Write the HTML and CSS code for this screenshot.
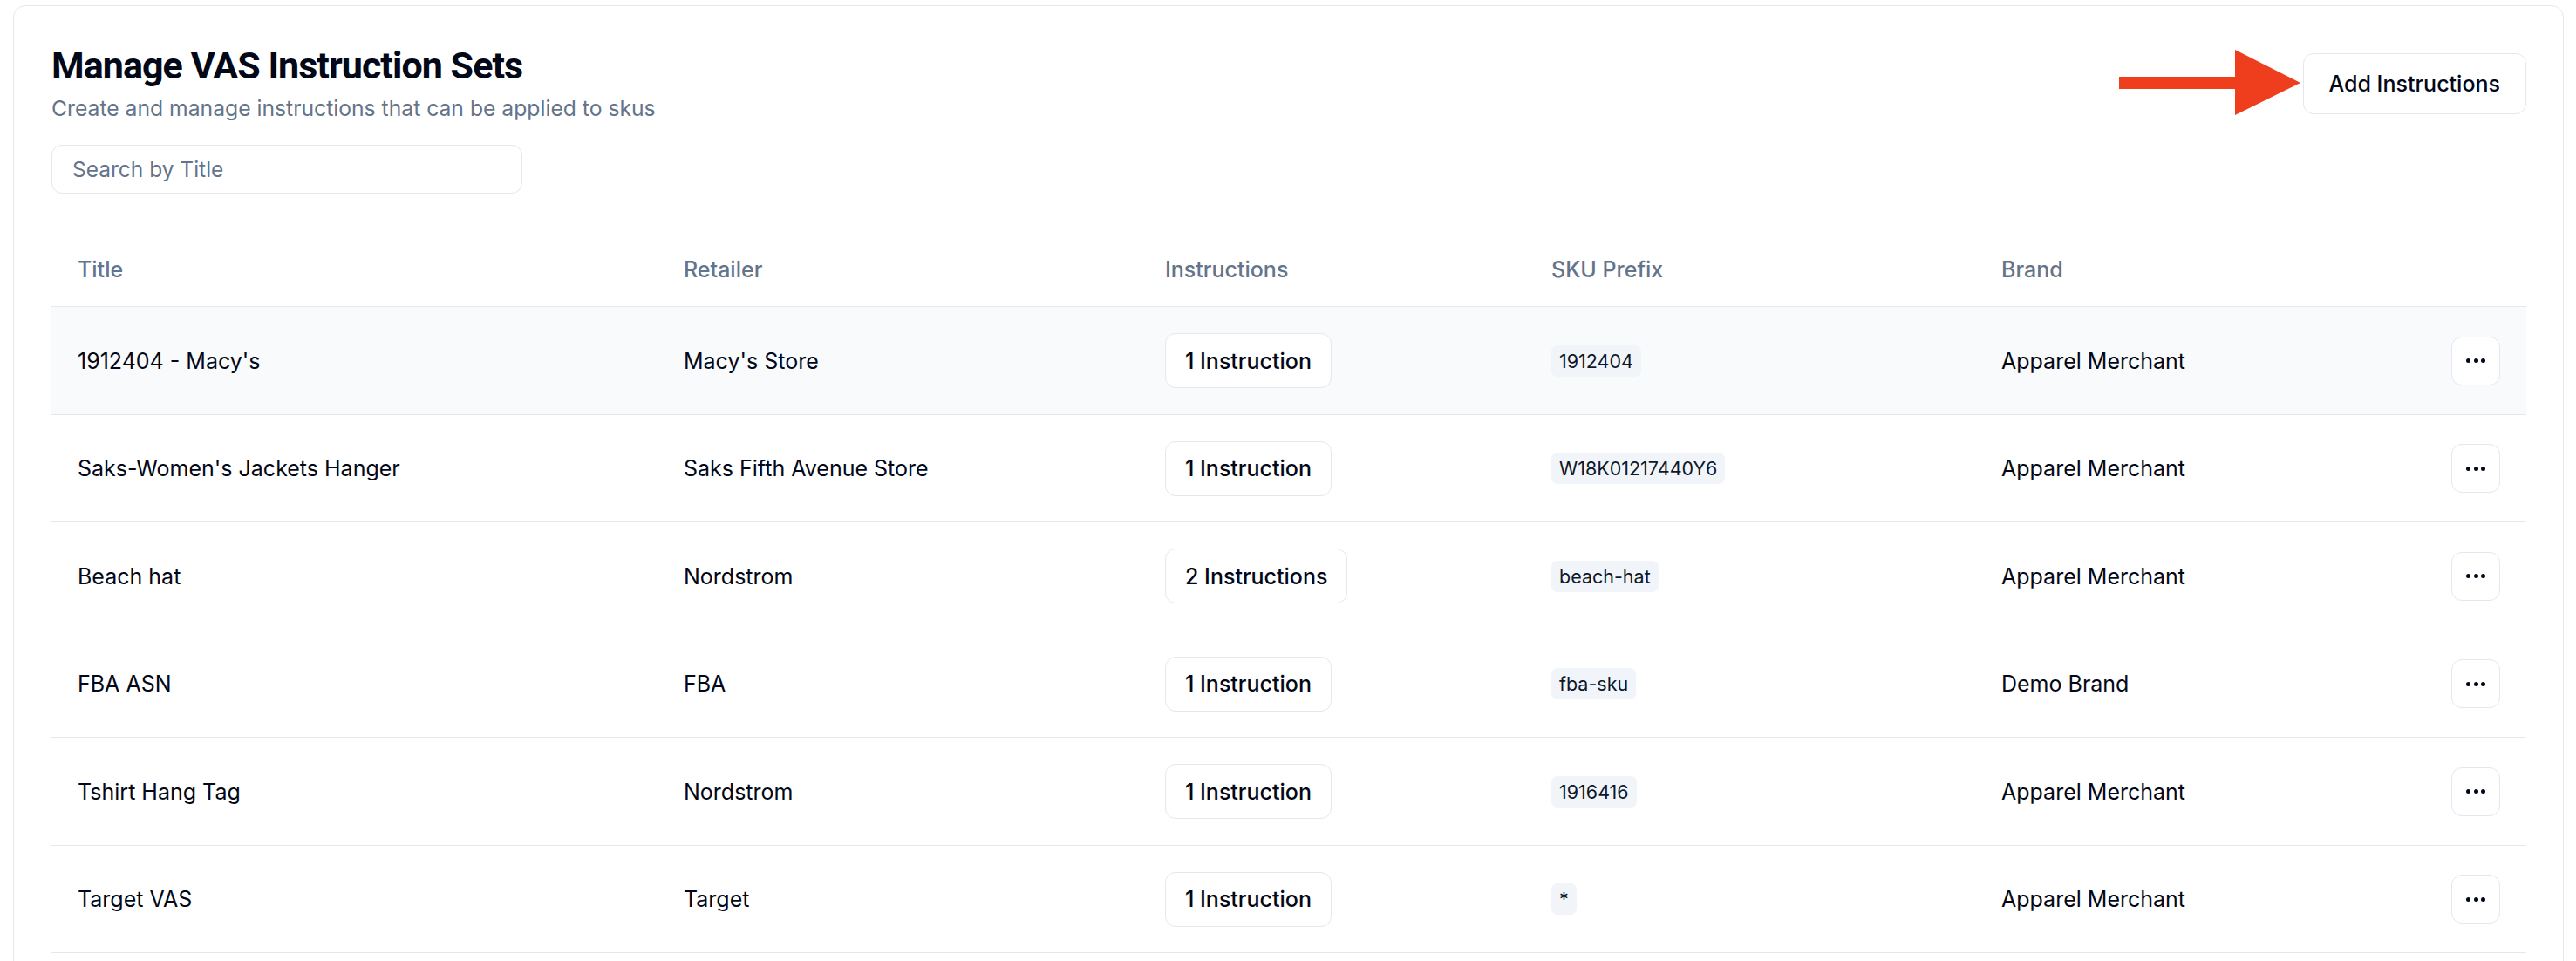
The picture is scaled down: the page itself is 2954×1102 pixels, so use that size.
FILE: index.html
```html
<!DOCTYPE html>
<html lang="en">
<head>
<meta charset="utf-8">
<title>Manage VAS Instruction Sets</title>
<link rel="stylesheet" href="styles.css">
</head>
<body>
<div class="card">
  <div class="card-head">
    <div class="head-left">
      <h1 class="title">Manage VAS Instruction Sets</h1>
      <p class="subtitle">Create and manage instructions that can be applied to skus</p>
      <input class="search" type="text" placeholder="Search by Title">
    </div>
    <div class="head-right">
      <svg class="arrow" width="210" height="76" viewBox="0 0 210 76" aria-hidden="true">
        <rect x="0" y="31" width="136" height="14" fill="#ee3e1d"/>
        <polygon points="133,0 208,38 133,75" fill="#ee3e1d"/>
      </svg>
      <button class="btn-add">Add Instructions</button>
    </div>
  </div>

  <table class="grid">
    <colgroup>
      <col class="c-title"><col class="c-retailer"><col class="c-instr"><col class="c-sku"><col class="c-brand"><col class="c-act">
    </colgroup>
    <thead>
      <tr><th>Title</th><th>Retailer</th><th>Instructions</th><th>SKU Prefix</th><th>Brand</th><th></th></tr>
    </thead>
    <tbody>
      <tr class="hover">
        <td>1912404 - Macy's</td><td>Macy's Store</td>
        <td><span class="badge">1 Instruction</span></td>
        <td><code class="sku">1912404</code></td><td>Apparel Merchant</td>
        <td class="act"><button class="more"><i></i><i></i><i></i></button></td>
      </tr>
      <tr>
        <td>Saks-Women's Jackets Hanger</td><td>Saks Fifth Avenue Store</td>
        <td><span class="badge">1 Instruction</span></td>
        <td><code class="sku">W18K01217440Y6</code></td><td>Apparel Merchant</td>
        <td class="act"><button class="more"><i></i><i></i><i></i></button></td>
      </tr>
      <tr>
        <td>Beach hat</td><td>Nordstrom</td>
        <td><span class="badge">2 Instructions</span></td>
        <td><code class="sku">beach-hat</code></td><td>Apparel Merchant</td>
        <td class="act"><button class="more"><i></i><i></i><i></i></button></td>
      </tr>
      <tr>
        <td>FBA ASN</td><td>FBA</td>
        <td><span class="badge">1 Instruction</span></td>
        <td><code class="sku">fba-sku</code></td><td>Demo Brand</td>
        <td class="act"><button class="more"><i></i><i></i><i></i></button></td>
      </tr>
      <tr>
        <td>Tshirt Hang Tag</td><td>Nordstrom</td>
        <td><span class="badge">1 Instruction</span></td>
        <td><code class="sku">1916416</code></td><td>Apparel Merchant</td>
        <td class="act"><button class="more"><i></i><i></i><i></i></button></td>
      </tr>
      <tr>
        <td>Target VAS</td><td>Target</td>
        <td><span class="badge">1 Instruction</span></td>
        <td><code class="sku">*</code></td><td>Apparel Merchant</td>
        <td class="act"><button class="more"><i></i><i></i><i></i></button></td>
      </tr>
    </tbody>
  </table>
</div>
</body>
</html>
```
FILE: styles.css
```css
* { box-sizing: border-box; }
html, body { margin: 0; padding: 0; background: #ffffff; }
body {
  font-family: Inter, "Noto Sans", "Liberation Sans", sans-serif;
  color: #020817;
  overflow: hidden;
  height: 1102px;
}
.card {
  margin: 6px 14px 0 15px;
  border: 1px solid #e2e8f0;
  border-radius: 14px;
  padding: 43px 43px 43px 43px;
  background: #fff;
}
.card-head {
  display: flex;
  justify-content: space-between;
  align-items: flex-start;
}
.head-left { display: flex; flex-direction: column; }
.title {
  margin: 0;
  font-family: Roboto, Inter, "Liberation Sans", sans-serif;
  font-size: 43px;
  line-height: 50px;
  font-weight: 700;
  letter-spacing: -0.022em;
  color: #020817;
}
.subtitle {
  margin: 5px 0 0 0;
  font-size: 24.7px;
  line-height: 38px;
  color: #64748b;
}
.search {
  margin-top: 23px;
  width: 540px;
  height: 56px;
  border: 1px solid #e2e8f0;
  border-radius: 12px;
  padding: 0 23px;
  font-family: inherit;
  font-size: 24.5px;
  color: #020817;
  background: #fff;
  outline: none;
}
.search::placeholder { color: #64748b; }
.head-right {
  position: relative;
  margin-top: 11px;
  margin-right: -1px;
}
.arrow {
  position: absolute;
  left: -211px;
  top: -4px;
}
.btn-add {
  height: 70px;
  padding: 0 29px;
  border: 1px solid #e2e8f0;
  border-radius: 12px;
  background: #fff;
  font-family: inherit;
  font-size: 25px;
  font-weight: 500;
  color: #020817;
}
.grid {
  margin-top: 44px;
  width: 100%;
  table-layout: fixed;
  border-collapse: separate;
  border-spacing: 0;
  font-size: 25px;
}
.c-title { width: 695px; }
.c-retailer { width: 552px; }
.c-instr { width: 443px; }
.c-sku { width: 516px; }
.c-brand { width: 516px; }
.c-act { width: 116px; }
.grid th {
  height: 86px;
  padding: 0 30px;
  text-align: left;
  font-weight: 500;
  color: #64748b;
  border-bottom: 1px solid #e2e8f0;
  vertical-align: middle;
}
.grid td {
  height: 123.5px;
  padding: 1px 30px 0 30px;
  border-bottom: 1px solid #e2e8f0;
  vertical-align: middle;
  white-space: nowrap;
}
.grid tr.hover td { background: #f8fafc; }
.badge {
  display: inline-flex;
  align-items: center;
  height: 63px;
  padding: 0 22px;
  border: 1px solid #e2e8f0;
  border-radius: 12px;
  background: #fff;
  font-weight: 500;
  color: #020817;
}
.sku {
  display: inline-block;
  height: 36px;
  line-height: 36px;
  padding: 0 9px;
  border-radius: 7px;
  background: #f1f5f9;
  font-family: Inter, "Noto Sans", sans-serif;
  font-size: 21.5px;
  color: #0f172a;
}
.grid td.act { text-align: right; }
.more {
  display: inline-flex;
  align-items: center;
  justify-content: center;
  gap: 3.5px;
  width: 56px;
  height: 56px;
  padding: 0;
  border: 1px solid #e2e8f0;
  border-radius: 12px;
  background: #fff;
  vertical-align: middle;
}
.more i {
  display: block;
  width: 5px;
  height: 5px;
  border-radius: 50%;
  background: #020817;
}
```
